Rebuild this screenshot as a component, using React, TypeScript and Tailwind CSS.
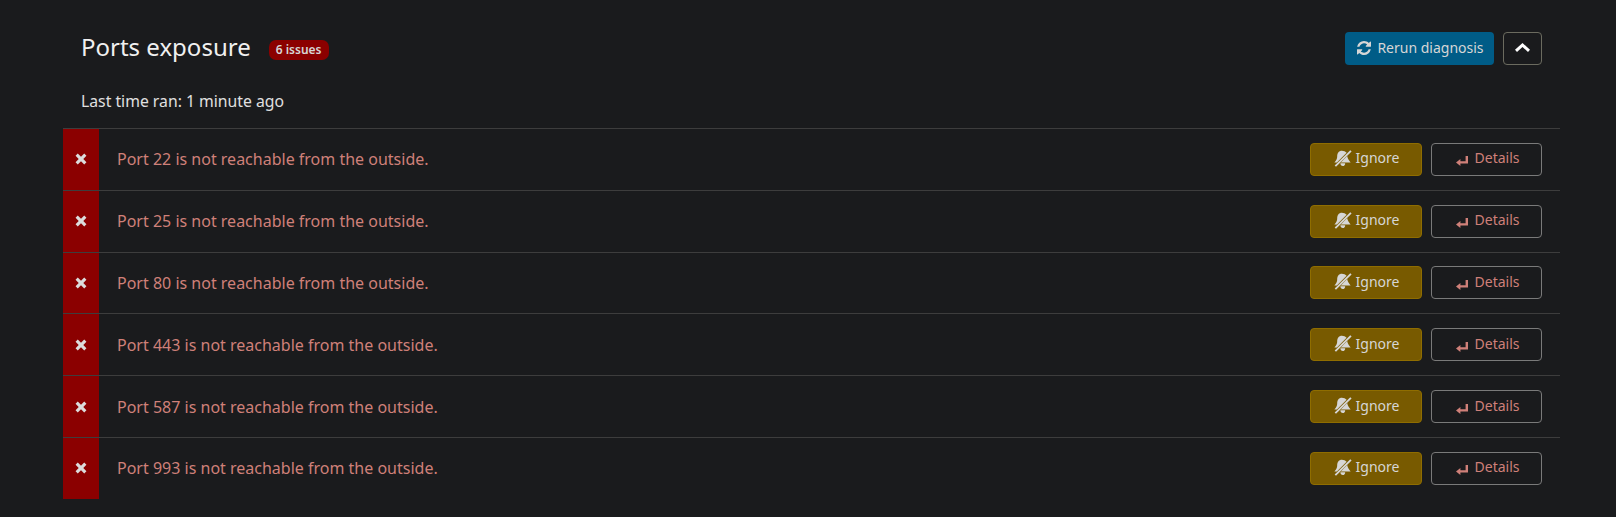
import React from 'react';

const ports = [22, 25, 80, 443, 587, 993];

const TimesIcon: React.FC = () => (
  <svg width="12" height="12" viewBox="0 0 13 13" fill="#dcdcdc">
    <path d="M3 .6 6.500 4 10 .6 12.400 3 9 6.500l3.400 3.500-2.400 2.400L6.500 9 3 12.400.6 10 4 6.500.6 3z" />
  </svg>
);

const RefreshIcon: React.FC = () => (
  <svg width="14" height="14" viewBox="0 0 1536 1536" fill="currentColor">
    <path d="M1511 928q0 5-1 7-64 268-268 434.500T764 1536q-146 0-282.500-55T238 1324l-129 129q-19 19-45 19t-45-19-19-45V960q0-26 19-45t45-19h448q26 0 45 19t19 45-19 45l-137 137q71 66 161 102t187 36q134 0 250-65t186-179q11-17 53-117 8-23 30-23h192q13 0 22.500 9.500t9.500 22.500zM1536 128v448q0 26-19 45t-45 19h-448q-26 0-45-19t-19-45 19-45l138-138Q969 256 768 256q-134 0-250 65T332 500q-11 17-53 117-8 23-30 23H50q-13 0-22.500-9.500T18 608v-7q65-268 270-434.500T768 0q146 0 284 55.500T1297 212l130-129q19-19 45-19t45 19 19 45z" />
  </svg>
);

const BellSlashIcon: React.FC = () => (
  <svg width="18" height="17" viewBox="0 0 18 17" fill="currentColor">
    <path d="M16.300.2 17.600 1.500 2 16.800.7 15.500z" />
    <path d="M7.800.8c2 0 3.700.7 4.800 2L2.900 12.400H.4c1.900-1.900 2.800-3.700 2.800-6.200C3.200 3 5.100.8 7.800.8zM13.200 6c.4 2.300 1.500 4.300 3.400 6.400H6.800zM6.400 13.200h4.800c0 1.700-1 2.900-2.400 2.900-1.200 0-2-.9-2.400-2z" />
  </svg>
);

const ReturnIcon: React.FC = () => (
  <svg width="12" height="10" viewBox="0 0 12 10" fill="currentColor">
    <path d="M9.600 0H12v7.600H4.400V10L0 6.400l4.400-3.500v2.400h5.200z" />
  </svg>
);

const ChevronUpIcon: React.FC = () => (
  <svg width="15" height="9" viewBox="0 0 15 9" fill="#ffffff">
    <path d="M7.500 0 15 6.800 13 9 7.500 4 2 9 0 6.800z" />
  </svg>
);

const PortRow: React.FC<{ port: number }> = ({ port }) => (
  <div className="flex h-[61.8px] border-t border-[#3d3d3d]">
    <div className="flex w-[36px] items-center justify-center bg-[#8b0000]">
      <TimesIcon />
    </div>
    <div className="flex flex-1 items-center justify-between pl-[18px] pr-[18px]">
      <span className="text-[#cf8079]">Port {port} is not reachable from the outside.</span>
      <div className="flex gap-[9px] text-sm">
        <button className="flex h-[33px] w-[112px] items-center justify-center gap-[4px] rounded border border-[#8f6d00] bg-[#785a00] pb-[2px] pl-[1px] text-[#d6d6d6]">
          <BellSlashIcon /> Ignore
        </button>
        <button className="flex h-[33px] w-[111px] items-center justify-center gap-[7px] rounded border border-[#7a7a7a] pb-[2px] pl-[2px] text-[#cf8079]">
          <span className="mt-[6px]"><ReturnIcon /></span> Details
        </button>
      </div>
    </div>
  </div>
);

export default function App() {
  return (
    <div className="min-h-[517px] bg-[#1a1b1d] pl-[63px] pr-[56px] font-['Noto_Sans',sans-serif] text-[#e0e0e0]">
      <div className="flex items-start justify-between pl-[18px] pr-[18px] pt-[32px]">
        <div className="flex items-center">
          <h2 className="text-[24px] leading-[30px] text-[#f0f0f0]">Ports exposure</h2>
          <span className="ml-[18px] mt-[5px] rounded-[7px] bg-[#8b0000] px-[7px] py-[2px] text-xs font-semibold text-[#d6d6d6]">6 issues</span>
        </div>
        <div className="flex gap-[9px]">
          <button className="flex h-[33px] w-[149px] items-center justify-center gap-[6px] rounded bg-[#005c87] pb-[2px] pl-[2px] text-sm text-[#d6d6d6]">
            <RefreshIcon /> Rerun diagnosis
          </button>
          <button className="flex h-[33px] w-[39px] items-center justify-center rounded border border-[#6b6b5f] pb-[2px]">
            <ChevronUpIcon />
          </button>
        </div>
      </div>
      <p className="mt-[24px] pb-[15px] pl-[18px] text-[15.75px] leading-[24px]">Last time ran: 1 minute ago</p>
      {ports.map(port => <PortRow key={port} port={port} />)}
    </div>
  );
}
